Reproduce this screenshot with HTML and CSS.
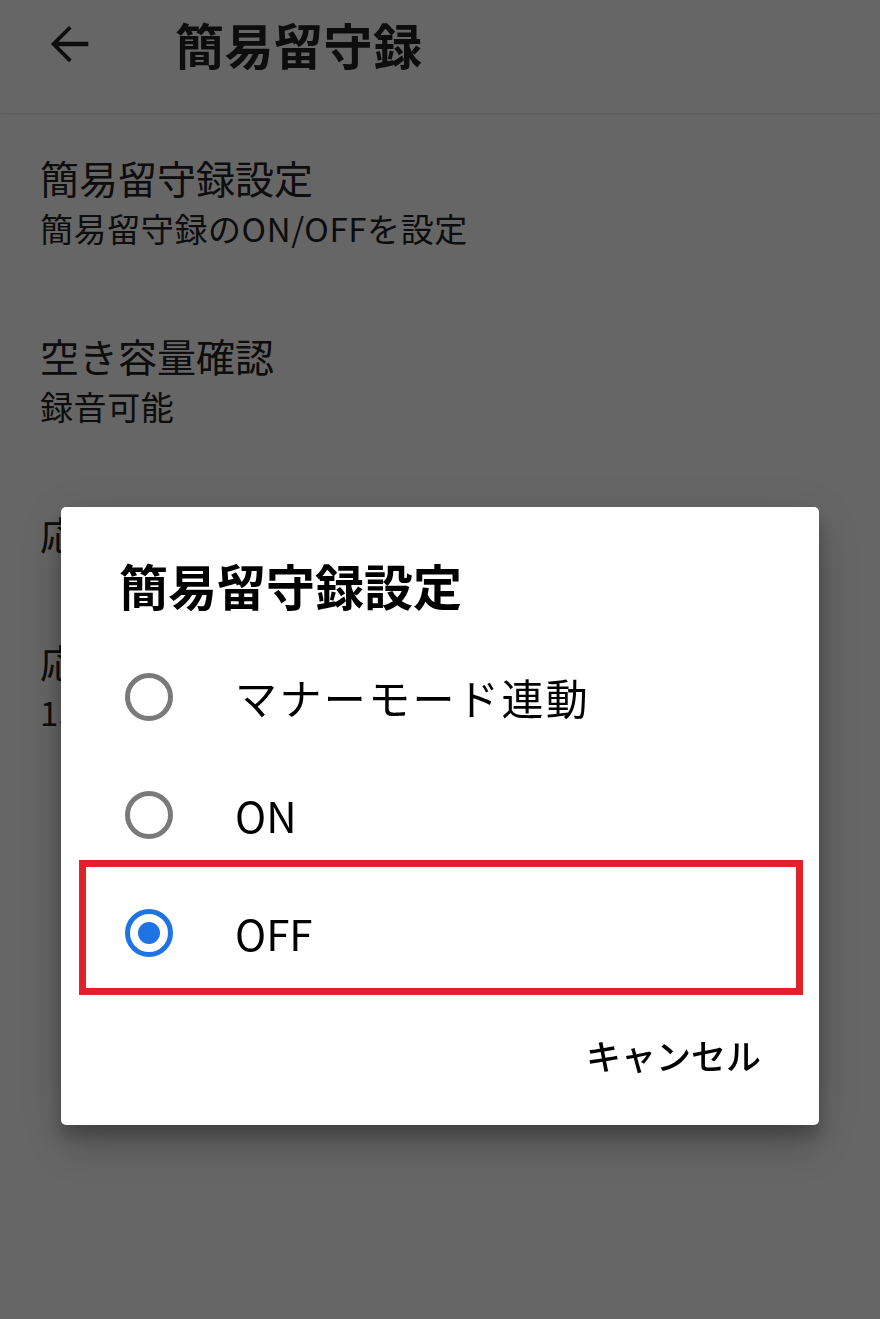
FILE: index.html
```html
<!DOCTYPE html>
<html lang="ja">
<head>
<meta charset="utf-8">
<title>簡易留守録</title>
<link rel="stylesheet" href="styles.css">
</head>
<body>
<div class="app">
  <header class="appbar">
    <svg class="back" viewBox="0 0 24 24" aria-hidden="true"><path d="M20 11.1H7.6l5.5-5.5-1.1-1.1L4.5 12l7.5 7.5 1.1-1.1-5.5-5.5H20z"/></svg>
    <h1 class="appbar-title">簡易留守録</h1>
  </header>
  <ul class="settings">
    <li class="setting">
      <div class="setting-title">簡易留守録設定</div>
      <div class="setting-sub">簡易留守録のON/OFFを設定</div>
    </li>
    <li class="setting">
      <div class="setting-title">空き容量確認</div>
      <div class="setting-sub">録音可能</div>
    </li>
    <li class="setting">
      <div class="setting-title">応答</div>
    </li>
    <li class="setting">
      <div class="setting-title">応答</div>
      <div class="setting-sub">15</div>
    </li>
  </ul>
</div>

<div class="scrim"></div>

<div class="dialog" role="dialog">
  <h2 class="dialog-title">簡易留守録設定</h2>
  <div class="options">
    <div class="option">
      <svg class="radio" viewBox="0 0 48 48"><circle class="ring" cx="24" cy="24" r="21.5"/></svg>
      <span class="option-label option-label-kana">マナーモード連動</span>
    </div>
    <div class="option">
      <svg class="radio" viewBox="0 0 48 48"><circle class="ring" cx="24" cy="24" r="21.5"/></svg>
      <span class="option-label">ON</span>
    </div>
    <div class="option option-selected">
      <svg class="radio radio-on" viewBox="0 0 48 48"><circle class="ring" cx="24" cy="24" r="21.5"/><circle class="dot" cx="24" cy="24" r="11"/></svg>
      <span class="option-label">OFF</span>
      <div class="highlight"></div>
    </div>
  </div>
  <div class="actions">
    <span class="btn-text">キャンセル</span>
  </div>
</div>
</body>
</html>
```

FILE: styles.css
```css
* { box-sizing: border-box; }

html, body {
  margin: 0;
  padding: 0;
  background: #ffffff;
}

body {
  font-family: "Noto Sans CJK JP", "Noto Sans", sans-serif;
  color: #212121;
  width: 880px;
  height: 1319px;
  overflow: hidden;
}

.appbar {
  height: 113px;
  display: flex;
  align-items: center;
  padding: 0 0 25px 40px;
  box-shadow: 0 1px 2px rgba(0, 0, 0, 0.14);
  position: relative;
}

.back {
  width: 58px;
  height: 58px;
  fill: #212121;
  flex: none;
}

.appbar-title {
  margin: 0 0 0 77px;
  font-size: 49px;
  line-height: 60px;
  font-weight: 700;
  letter-spacing: 0.5px;
}

.settings {
  list-style: none;
  margin: 0;
  padding: 0;
}

.setting {
  padding: 38px 40px;
}

.setting-title {
  font-size: 39px;
  line-height: 52px;
}

.setting-sub {
  font-size: 33px;
  line-height: 50px;
  letter-spacing: 0.6px;
}

.scrim {
  position: fixed;
  inset: 0;
  background: rgba(0, 0, 0, 0.6);
}

.dialog {
  position: absolute;
  left: 61px;
  top: 507px;
  width: 758px;
  background: #ffffff;
  border-radius: 5px;
  color: #000000;
  box-shadow: 0 24px 38px rgba(0, 0, 0, 0.14), 0 9px 46px rgba(0, 0, 0, 0.12), 0 11px 15px rgba(0, 0, 0, 0.2);
}

.dialog-title {
  margin: 0;
  padding: 48px 0 0 58px;
  font-size: 49px;
  line-height: 60px;
  font-weight: 700;
}

.options {
  margin-top: 23px;
}

.option {
  position: relative;
  height: 118px;
  display: flex;
  align-items: center;
  padding-left: 64px;
}

.radio {
  width: 48px;
  height: 48px;
  flex: none;
}

.ring {
  fill: none;
  stroke: #7a7a7a;
  stroke-width: 5;
}

.radio-on .ring {
  stroke: #1f74e4;
}

.dot {
  fill: #1f74e4;
}

.option-label {
  margin-left: 62px;
  font-size: 42px;
  line-height: 56px;
}

.option-label-kana {
  letter-spacing: 2.4px;
}

.highlight {
  position: absolute;
  top: -14px;
  bottom: -3px;
  left: 18px;
  right: 16px;
  border: 7px solid #e2212b;
}

.actions {
  display: flex;
  justify-content: flex-end;
  padding: 39px 58px 46px 0;
}

.btn-text {
  font-size: 35px;
  line-height: 48px;
  font-weight: 500;
}
```
